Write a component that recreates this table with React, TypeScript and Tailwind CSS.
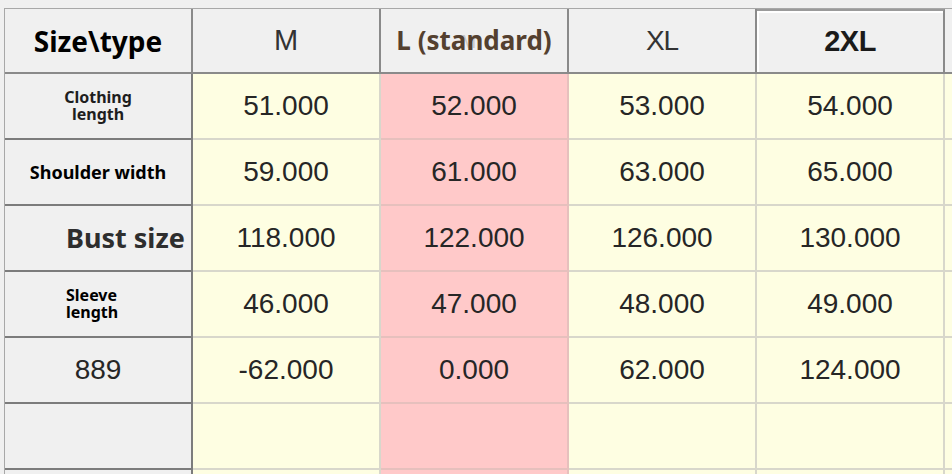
import React from "react";

const NUM = "font-['Liberation_Sans',Arial,sans-serif]";
const LABEL = "font-['Noto_Sans',sans-serif] font-bold";

type Row = { label: React.ReactNode; values: string[] };

const rows: Row[] = [
  {
    label: (
      <div className={`${LABEL} w-full text-center text-[16px] leading-[17px] text-[#1e1e1e]`}>
        Clothing
        <br />
        length
      </div>
    ),
    values: ["51.000", "52.000", "53.000", "54.000"],
  },
  {
    label: <div className={`${LABEL} w-full text-center text-[18px] text-black`}>Shoulder width</div>,
    values: ["59.000", "61.000", "63.000", "65.000"],
  },
  {
    label: <div className={`${LABEL} w-full pl-[61px] text-left text-[27px] text-[#2e2e2e]`}>Bust size</div>,
    values: ["118.000", "122.000", "126.000", "130.000"],
  },
  {
    label: (
      <div className={`${LABEL} w-full pl-[61px] text-left text-[16px] leading-[17px] text-black`}>
        Sleeve
        <br />
        length
      </div>
    ),
    values: ["46.000", "47.000", "48.000", "49.000"],
  },
  {
    label: <div className={`${NUM} w-full text-center text-[28px] text-[#262626]`}>889</div>,
    values: ["-62.000", "0.000", "62.000", "124.000"],
  },
  { label: null, values: ["", "", "", ""] },
  { label: null, values: ["", "", "", ""] },
];

function HeaderCell({ children, raised }: { children?: React.ReactNode; raised?: boolean }) {
  return (
    <div
      className={`relative flex items-center justify-center bg-[#f0f0f0] border-r-2 border-b-2 border-[#8a8a8a] ${
        raised ? "border-t-2 border-t-[#9a9a9a] shadow-[inset_2px_2px_0_#ffffff]" : ""
      }`}
    >
      {children}
    </div>
  );
}

function FirstColCell({ children }: { children?: React.ReactNode }) {
  return (
    <div className="flex items-center bg-[#f0f0f0] border-r-2 border-b-2 border-[#7c7c7c]">{children}</div>
  );
}

function DataCell({ value, pink }: { value: string; pink?: boolean }) {
  return (
    <div
      className={`flex items-center justify-center border-r-2 border-b-2 ${
        pink ? "bg-[#ffc9c9] border-[#e6c0bd]" : "bg-[#fefee2] border-[#d8d7cb]"
      }`}
    >
      <span className={`${NUM} text-[28px] text-[#262626]`}>{value}</span>
    </div>
  );
}

export default function App() {
  return (
    <div className="w-[952px] h-[474px] overflow-hidden bg-[#f0f0f0] pl-[4px] pt-[8px]">
      <div className="grid grid-cols-[repeat(6,188px)] grid-rows-[65px_repeat(7,66px)] border-l border-t border-[#a8a8a8] w-max">
        <HeaderCell>
          <span className={`${LABEL} text-[28px] text-black`}>Size\type</span>
        </HeaderCell>
        <HeaderCell>
          <span className={`${NUM} text-[29px] text-[#333333]`}>M</span>
        </HeaderCell>
        <HeaderCell>
          <span className={`${NUM} absolute left-[80px] top-[20px] text-[18px] text-[#cdc9c5]`}>M</span>
          <span className={`${LABEL} relative text-[26px] text-[#54402f]`}>L (standard)</span>
        </HeaderCell>
        <HeaderCell>
          <span className={`${NUM} text-[28px] tracking-[-1px] text-[#333333]`}>XL</span>
        </HeaderCell>
        <HeaderCell raised>
          <span className={`${NUM} font-bold text-[29px] tracking-[-0.5px] text-[#1a1a1a]`}>2XL</span>
        </HeaderCell>
        <HeaderCell />

        {rows.map((r, i) => (
          <React.Fragment key={i}>
            <FirstColCell>{r.label}</FirstColCell>
            {r.values.map((v, j) => (
              <DataCell key={j} value={v} pink={j === 1} />
            ))}
            <DataCell value="" />
          </React.Fragment>
        ))}
      </div>
    </div>
  );
}
